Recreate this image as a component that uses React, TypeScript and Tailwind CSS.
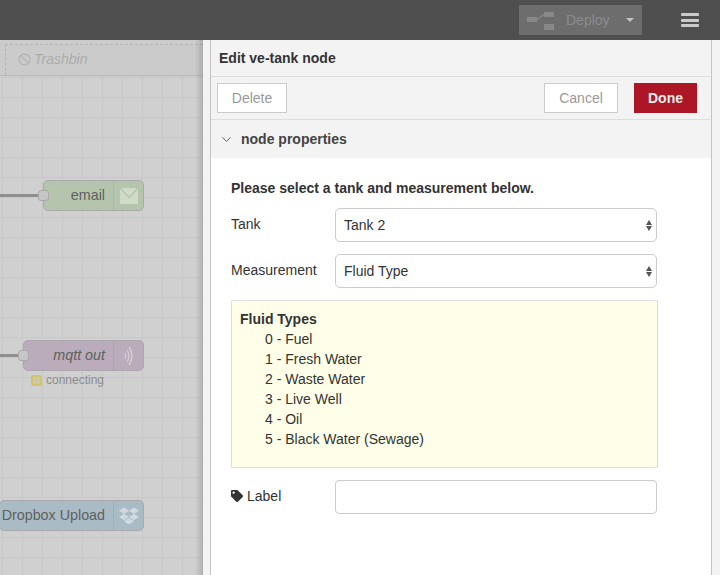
import type { ReactNode } from "react";
import { FaTag, FaDropbox } from "react-icons/fa";
import { Ban, ChevronDown } from "lucide-react";

const sans = "font-['Liberation_Sans',Arial,sans-serif]";

function Node({ label, color, italic, icon, wire, place }: { label: string; color: string; italic?: boolean; icon: ReactNode; wire?: string; place: string }) {
  return (
    <div className={`absolute flex items-center ${place}`}>
      {wire ? <div className={`h-[3px] bg-[#8f8f8f] ${wire}`} /> : null}
      <div className={`relative flex h-[31px] flex-1 items-center rounded-[5px] border border-[#a9a9a9] ${wire ? "ml-[5px]" : ""} ${color}`}>
        {wire ? <div className="absolute left-[-6px] top-[9px] h-[11px] w-[11px] rounded-[3px] border border-[#a9a9a9] bg-[#c6c6c6]" /> : null}
        <span className={`flex-1 whitespace-nowrap pr-[8px] text-right text-[14.3px] leading-[29px] text-[#5f5f5f] ${italic ? "italic" : ""}`}>{label}</span>
        <div className="flex h-[29px] w-[30px] items-center justify-center border-l border-[#0000000f]">{icon}</div>
      </div>
    </div>
  );
}

function Select({ value }: { value: string }) {
  return (
    <div className="flex h-[34px] w-[322px] items-center justify-between rounded-[5px] border border-[#cccccc] bg-white pl-[8px] pr-[4px]">
      <span>{value}</span>
      <div className="flex flex-col gap-[1px]">
        <div className="h-0 w-0 border-x-[3.5px] border-b-[5px] border-x-transparent border-b-[#555555]" />
        <div className="h-0 w-0 border-x-[3.5px] border-t-[5px] border-x-transparent border-t-[#555555]" />
      </div>
    </div>
  );
}

export default function App() {
  return (
    <div className={`flex h-[575px] w-[720px] flex-col overflow-hidden bg-white ${sans}`}>
      <header className="flex h-10 items-center justify-end bg-[#4f4f4f]">
        <div className="flex h-[30px] w-[123px] items-center bg-[#6d6d6d] pl-[8px]">
          <svg className="mt-[2px]" width="27" height="18" viewBox="0 0 27 18" fill="#888888">
            <rect x="0" y="5" width="10" height="5" />
            <rect x="17" y="0" width="10" height="5" />
            <rect x="17" y="12" width="10" height="6" />
            <path d="M10 8 L17 2" stroke="#888888" strokeWidth="1.2" />
          </svg>
          <span className="ml-[12px] text-[14px] text-[#8c8c8c]">Deploy</span>
          <div className="ml-[16px] h-0 w-0 border-x-[4px] border-t-[4px] border-x-transparent border-t-[#c4c4c4]" />
        </div>
        <div className="ml-[39px] mr-[21px] flex w-[18px] flex-col gap-[2.5px]">
          <div className="h-[3px] rounded-[1px] bg-[#cbcbcb]" />
          <div className="h-[3px] rounded-[1px] bg-[#cbcbcb]" />
          <div className="h-[3px] rounded-[1px] bg-[#cbcbcb]" />
        </div>
      </header>
      <div className="flex min-h-0 flex-1">
        <div className="relative w-[203px] overflow-hidden bg-[#d0d0d0] bg-[linear-gradient(#c8c8c8_1px,transparent_1px),linear-gradient(90deg,#c8c8c8_1px,transparent_1px)] bg-[size:20px_20px] bg-[position:2px_17px]">
          <div className="flex h-[36px] border-b border-[#b9b9b9] bg-[#cbcbcb] pl-[5px] pt-[4px]">
            <div className="flex flex-1 items-center gap-[3px] border-l border-t border-dashed border-[#b5b5b5] pb-[2px] pl-[12px]">
              <Ban size={13} className="text-[#b0b0b0]" strokeWidth={2} />
              <span className="text-[14px] italic text-[#acacac]">Trashbin</span>
            </div>
          </div>
          <Node place="left-0 top-[140px] w-[144px]" wire="w-[38px]" label="email" color="bg-[#b5c5ad]" icon={
            <svg width="18" height="16" viewBox="0 0 18 16"><rect width="18" height="16" fill="#cfdac9" /><path d="M0 0 L9 9.5 L18 0" fill="none" stroke="#b5c5ad" strokeWidth="1.3" /></svg>
          } />
          <Node place="left-0 top-[300px] w-[144px]" wire="w-[18px]" label="mqtt out" color="bg-[#baacba]" italic icon={
            <svg width="12" height="22" viewBox="0 0 12 22" fill="none" stroke="#d8d0d8"><path d="M2 8 Q4 11 2 14" /><path d="M4 5 Q8 11 4 17" strokeWidth="1.2" /><path d="M6 2 Q12 11 6 20" strokeWidth="1.4" /></svg>
          } />
          <div className="absolute left-[31px] top-[333px] flex items-center gap-[4px]">
            <div className="h-[11px] w-[11px] rounded-[2px] border-[2.5px] border-[#d4c366] bg-[#cdc9a8]" />
            <span className="text-[12px] leading-[14px] text-[#8c8c8c]">connecting</span>
          </div>
          <Node place="left-[-1px] top-[460px] w-[145px]" label="Dropbox Upload" color="bg-[#a9bcc5]" icon={<FaDropbox size={20} className="text-[#cfdbe0]" />} />
          <div className="pointer-events-none absolute inset-y-0 right-0 w-[8px] bg-gradient-to-r from-transparent to-[#00000026]" />
        </div>
        <div className="w-[7px] bg-[#f3f3f3]" />
        <main className="flex w-[502px] flex-col border-x border-[#c4c4c4] bg-white text-[14px] text-[#333333]">
          <div className="flex h-[37px] items-center border-b border-[#dddddd] bg-[#f3f3f3] pl-[8px] text-[14px] font-bold text-[#333333]">Edit ve-tank node</div>
          <div className="flex h-[43px] items-center border-b border-[#dddddd] bg-[#f3f3f3] pl-[6px] pr-[14px]">
            <button className="h-[30px] w-[70px] border border-[#cccccc] bg-white text-[14px] text-[#999999]">Delete</button>
            <button className="ml-auto h-[30px] w-[74px] border border-[#cccccc] bg-white text-[14px] text-[#999999]">Cancel</button>
            <button className="ml-[16px] h-[30px] w-[63px] bg-[#ad1625] text-[14px] font-bold text-[#eeeeee]">Done</button>
          </div>
          <div className="flex h-[38px] items-center bg-[#f3f3f3] pl-[8px] text-[14px] font-bold text-[#444444]">
            <ChevronDown size={15} strokeWidth={1.5} className="text-[#555555]" />
            <span className="ml-[7px]">node properties</span>
          </div>
          <div className="pl-[20px] pr-[53px] pt-[22px]">
            <div className="h-[16px] text-[14px] font-bold leading-[16px]">Please select a tank and measurement below.</div>
            <div className="mt-[12px] flex h-[34px] items-center">
              <label className="w-[104px] pb-[2px]">Tank</label>
              <Select value="Tank 2" />
            </div>
            <div className="mt-[12px] flex h-[34px] items-center">
              <label className="w-[104px] pb-[2px]">Measurement</label>
              <Select value="Fluid Type" />
            </div>
            <div className="mt-[12px] h-[168px] rounded-[1px] border border-[#dddddd] bg-[#ffffe9] pl-[8px] pt-[8px] leading-[20px]">
              <div className="font-bold">Fluid Types</div>
              <div className="pl-[25px]">
                <div>0 - Fuel</div>
                <div>1 - Fresh Water</div>
                <div>2 - Waste Water</div>
                <div>3 - Live Well</div>
                <div>4 - Oil</div>
                <div>5 - Black Water (Sewage)</div>
              </div>
            </div>
            <div className="mt-[12px] flex h-[34px] items-center">
              <label className="flex w-[104px] items-center gap-[4px] pb-[2px]"><FaTag size={12} className="text-[#333333]" />Label</label>
              <div className="h-[34px] w-[322px] rounded-[4px] border border-[#cccccc] bg-white" />
            </div>
          </div>
        </main>
        <div className="flex-1 bg-[#f3f3f3]" />
      </div>
    </div>
  );
}
